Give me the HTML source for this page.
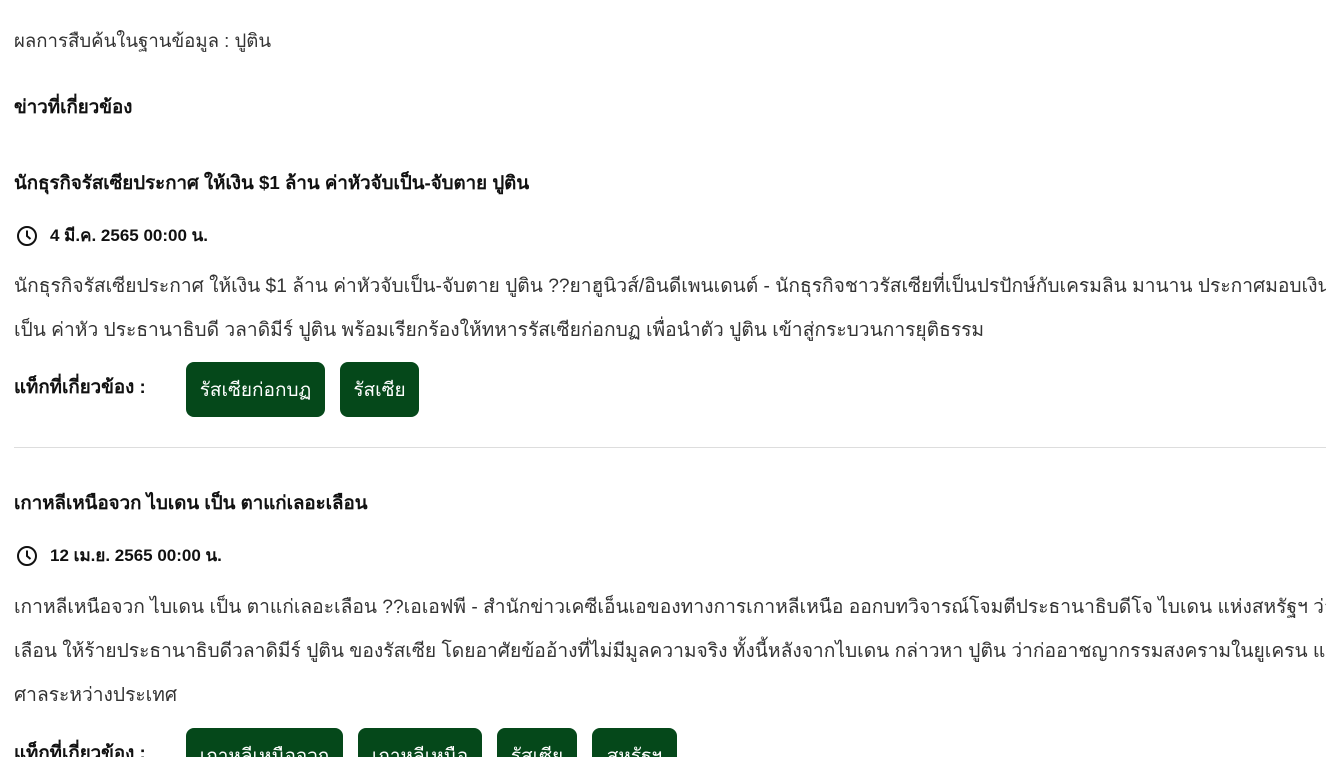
<!DOCTYPE html>
<html><head><meta charset="utf-8"><style>
html,body{margin:0;padding:0;width:1326px;height:757px;overflow:hidden;background:#fff;}
body{font-family:"Liberation Sans","Noto Sans CJK SC",sans-serif;color:#333;position:relative;}
.a{position:absolute;white-space:nowrap;overflow:hidden;}
.t{font-size:19.2px;color:#333;right:0;}
.h{font-size:18.7px;font-weight:bold;color:#111;}
.d{font-size:17px;font-weight:bold;color:#111;display:flex;align-items:center;}
.d svg{margin-right:12px;}
.tag{position:absolute;height:55px;background:#05481a;color:#fff;border-radius:8px;font-size:19px;display:flex;align-items:center;justify-content:center;white-space:nowrap;overflow:hidden;}
.hr{position:absolute;left:14px;right:0;top:447px;height:1px;background:#ddd;}
</style></head><body>
<div class="a t" style="left:14px;top:27px;font-size:18.6px;">ผลการสืบค้นในฐานข้อมูล : ปูติน</div>
<div class="a h" style="left:14px;top:93px;">ข่าวที่เกี่ยวข้อง</div>

<div class="a h" style="left:14px;top:169px;">นักธุรกิจรัสเซียประกาศ ให้เงิน $1 ล้าน ค่าหัวจับเป็น-จับตาย ปูติน</div>
<div class="a d" style="left:16px;top:222px;"><svg width="22" height="22" viewBox="0 0 22 22"><circle cx="11" cy="11" r="9" fill="none" stroke="#111" stroke-width="2"/><path d="M11 5.5V11l3.5 3" fill="none" stroke="#111" stroke-width="2"/></svg>4 มี.ค. 2565 00:00 น.</div>
<div class="a t" style="left:14px;top:271px;">นักธุรกิจรัสเซียประกาศ ให้เงิน $1 ล้าน ค่าหัวจับเป็น-จับตาย ปูติน ??ยาฮูนิวส์/อินดีเพนเดนต์ - นักธุรกิจชาวรัสเซียที่เป็นปรปักษ์กับเครมลิน มานาน ประกาศมอบเงิน 1 ล้านดอลลาร์</div>
<div class="a t" style="left:14px;top:315px;">เป็น ค่าหัว ประธานาธิบดี วลาดิมีร์ ปูติน พร้อมเรียกร้องให้ทหารรัสเซียก่อกบฏ เพื่อนำตัว ปูติน เข้าสู่กระบวนการยุติธรรม</div>
<div class="a h" style="left:14px;top:373px;">แท็กที่เกี่ยวข้อง :</div>
<div class="tag" style="left:186px;top:362px;width:139px;">รัสเซียก่อกบฏ</div>
<div class="tag" style="left:340px;top:362px;width:79px;">รัสเซีย</div>
<div class="hr"></div>

<div class="a h" style="left:14px;top:489px;">เกาหลีเหนือจวก ไบเดน เป็น ตาแก่เลอะเลือน</div>
<div class="a d" style="left:16px;top:542px;"><svg width="22" height="22" viewBox="0 0 22 22"><circle cx="11" cy="11" r="9" fill="none" stroke="#111" stroke-width="2"/><path d="M11 5.5V11l3.5 3" fill="none" stroke="#111" stroke-width="2"/></svg>12 เม.ย. 2565 00:00 น.</div>
<div class="a t" style="left:14px;top:592px;">เกาหลีเหนือจวก ไบเดน เป็น ตาแก่เลอะเลือน ??เอเอฟพี - สำนักข่าวเคซีเอ็นเอของทางการเกาหลีเหนือ ออกบทวิจารณ์โจมตีประธานาธิบดีโจ ไบเดน แห่งสหรัฐฯ ว่าเป็น ตาแก่</div>
<div class="a t" style="left:14px;top:636px;">เลือน ให้ร้ายประธานาธิบดีวลาดิมีร์ ปูติน ของรัสเซีย โดยอาศัยข้ออ้างที่ไม่มีมูลความจริง ทั้งนี้หลังจากไบเดน กล่าวหา ปูติน ว่าก่ออาชญากรรมสงครามในยูเครน และเรียกร้อง</div>
<div class="a t" style="left:14px;top:680px;">ศาลระหว่างประเทศ</div>
<div class="a h" style="left:14px;top:739px;">แท็กที่เกี่ยวข้อง :</div>
<div class="tag" style="left:186px;top:728px;width:157px;">เกาหลีเหนือจวก</div>
<div class="tag" style="left:358px;top:728px;width:124px;">เกาหลีเหนือ</div>
<div class="tag" style="left:497px;top:728px;width:80px;">รัสเซีย</div>
<div class="tag" style="left:592px;top:728px;width:85px;">สหรัฐฯ</div>
</body></html>
